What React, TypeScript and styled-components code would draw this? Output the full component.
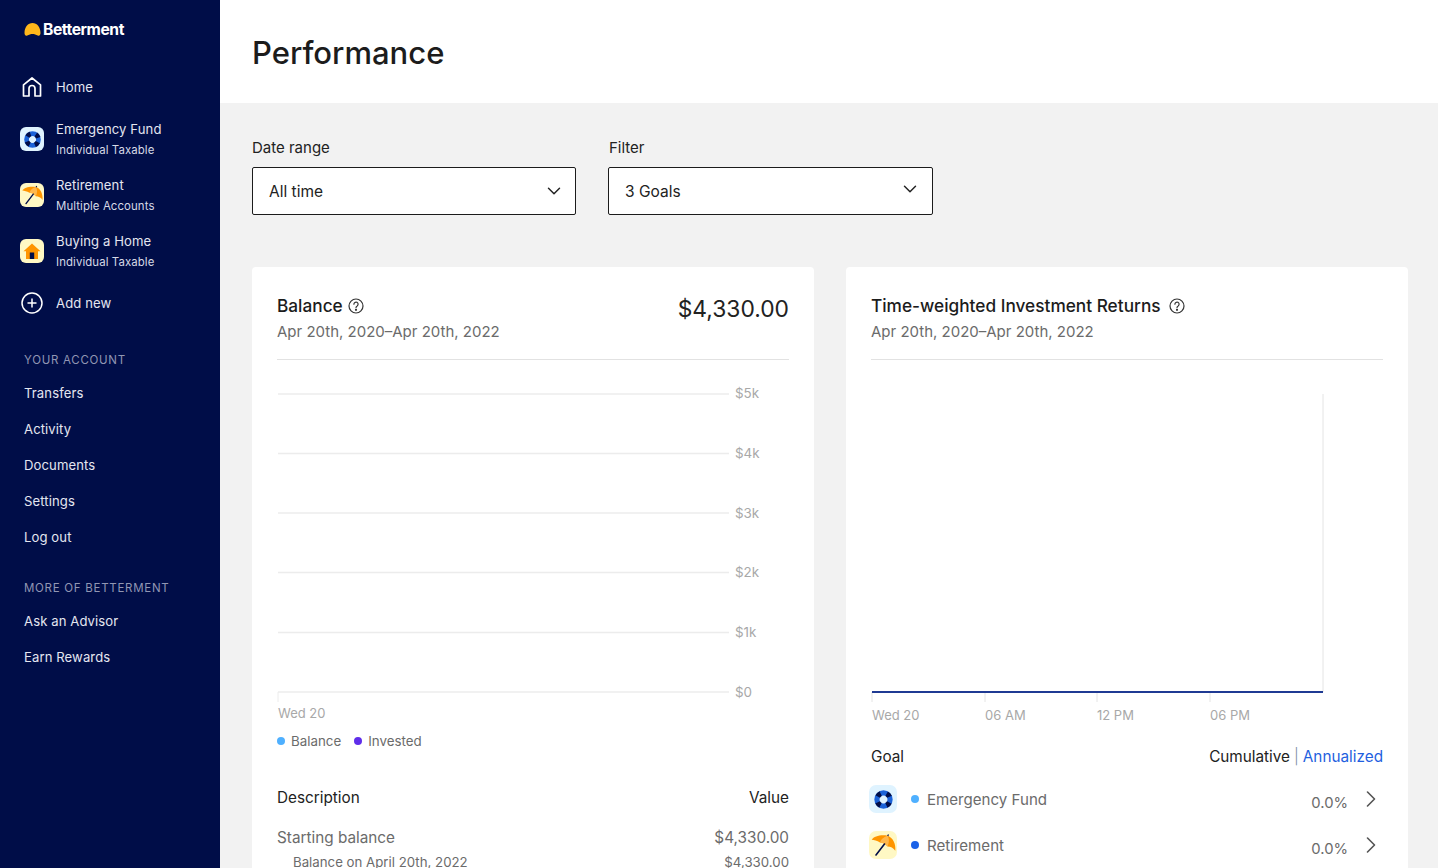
import React from 'react'
import styled, { createGlobalStyle } from 'styled-components'
import { ChevronDown, ChevronRight } from 'lucide-react'

const FONT = `Inter, "Liberation Sans", sans-serif`

const GlobalStyle = createGlobalStyle`
  html, body {
    margin: 0;
    height: 100%;
    overflow: hidden;
    background: #f2f2f2;
    font-family: ${FONT};
  }
  * { box-sizing: border-box; }
`

const Page = styled.div`
  display: flex;
  width: 1438px;
  height: 868px;
  overflow: hidden;
`

const Sidebar = styled.nav`
  flex: 0 0 220px;
  background: #000d48;
  color: #e4e6f0;
  padding: 20px 0 0;
`

const Logo = styled.div`
  display: flex;
  align-items: center;
  gap: 2px;
  height: 18px;
  margin: 0 0 25px 24px;
  color: #fff;
  font-size: 15.7px;
  font-weight: 700;
  letter-spacing: -0.46px;
`

const NavRow = styled.div<{ $short?: boolean }>`
  display: flex;
  align-items: center;
  height: ${p => (p.$short ? 48 : 56)}px;
  padding-left: 20px;
`

const NavIcon = styled.div`
  flex: 0 0 36px;
  display: flex;
  align-items: center;
`

const NavText = styled.div`
  display: flex;
  flex-direction: column;
  gap: 6px;
`

const NavTitle = styled.span`
  font-size: 13.1px;
  line-height: 16px;
  letter-spacing: 0.1px;
`

const NavSub = styled.span`
  font-size: 11.4px;
  line-height: 15px;
  letter-spacing: 0.1px;
  color: #d6d9e6;
`

const SectionLabel = styled.div`
  margin: 24px 0 0 24px;
  height: 18px;
  font-size: 11.5px;
  line-height: 18px;
  letter-spacing: 0.72px;
  color: #9196b3;
`

const NavLinks = styled.div`
  display: flex;
  flex-direction: column;
  padding: 6px 0 0 24px;
`

const NavLink = styled.div`
  height: 36px;
  font-size: 13.1px;
  line-height: 36px;
  letter-spacing: 0.1px;
`

const IconTile = styled.div<{ $bg: string; $size: number }>`
  width: ${p => p.$size}px;
  height: ${p => p.$size}px;
  border-radius: ${p => Math.round(p.$size / 4)}px;
  background: ${p => p.$bg};
  display: flex;
  align-items: center;
  justify-content: center;
  flex: none;
`

const Main = styled.main`
  flex: 1;
  min-width: 0;
`

const Header = styled.header`
  height: 103px;
  background: #fff;
  padding: 32px 32px 0;
`

const PageTitle = styled.h1`
  margin: 0;
  font-size: 31px;
  line-height: 42px;
  font-weight: 500;
  color: #1c1c1c;
`

const Content = styled.div`
  padding: 36px 30px 0 32px;
`

const Filters = styled.div`
  display: flex;
  gap: 32px;
  margin-bottom: 52px;
`

const Field = styled.div<{ $width: number }>`
  width: ${p => p.$width}px;
`

const FieldLabel = styled.div<{ $inset?: boolean }>`
  font-size: 15px;
  line-height: 18px;
  color: #222;
  margin-bottom: 10px;
  padding-left: ${p => (p.$inset ? 1 : 0)}px;
`

const Select = styled.div`
  height: 48px;
  border: 1px solid #1c1c1c;
  border-radius: 2px;
  background: #fff;
  display: flex;
  align-items: center;
  justify-content: space-between;
  padding: 0 10px 0 16px;
  font-size: 15.5px;
  color: #222;
`

const Chevron = styled(ChevronDown)<{ $raised?: boolean }>`
  flex: none;
  margin: ${p => (p.$raised ? '0 1px 4px 0' : '0')};
`

const Cards = styled.div`
  display: grid;
  grid-template-columns: 562px 562px;
  gap: 32px;
`

const Card = styled.section`
  background: #fff;
  border-radius: 4px;
  padding: 28px 25px 0;
  height: 640px;
`

const CardHead = styled.div`
  display: flex;
  justify-content: space-between;
  height: 65px;
  border-bottom: 1px solid #e2e2e2;
`

const CardTitle = styled.div<{ $gap: number }>`
  display: flex;
  align-items: center;
  gap: ${p => p.$gap}px;
  font-size: 17.25px;
  line-height: 22px;
  font-weight: 500;
  color: #1c1c1c;
`

const CardDate = styled.div`
  margin-top: 5px;
  font-size: 15px;
  line-height: 20px;
  color: #6b6b6b;
`

const BigValue = styled.div`
  font-size: 22.8px;
  line-height: 28px;
  color: #222;
`

const Chart = styled.svg`
  display: block;
  font-family: ${FONT};
`

const Legend = styled.div`
  display: flex;
  gap: 13px;
  margin-top: 7px;
  height: 20px;
  align-items: center;
  font-size: 13.35px;
  color: #6b6b6b;
`

const LegendItem = styled.span`
  display: flex;
  align-items: center;
  gap: 6px;
`

const Dot = styled.span<{ $color: string }>`
  width: 8px;
  height: 8px;
  border-radius: 50%;
  background: ${p => p.$color};
  flex: none;
`

const TableHead = styled.div`
  display: flex;
  justify-content: space-between;
  font-size: 15.3px;
  line-height: 20px;
  color: #222;
`

const DescHead = styled(TableHead)`
  margin-top: 37px;
`

const StartRow = styled(TableHead)`
  margin-top: 20px;
  color: #6b6b6b;
`

const SubRow = styled(TableHead)`
  margin-top: 4px;
  padding-left: 16px;
  font-size: 13.25px;
  color: #6b6b6b;
`

const GoalHead = styled(TableHead)`
  margin-top: 23px;
`

const Toggle = styled.div`
  display: flex;
  gap: 4px;
`

const ToggleLink = styled.span`
  color: #1f5fe0;
`

const ToggleBar = styled.span`
  color: #7a8aa3;
  font-weight: 300;
`

const GoalRow = styled.div`
  display: flex;
  align-items: center;
  height: 46px;
  color: #6b6b6b;
  font-size: 15.1px;
`

const GoalList = styled.div`
  margin-top: 9px;
  margin-left: -2px;
`

const GoalName = styled.span`
  margin-left: 14px;
  flex: 1;
  display: flex;
  align-items: center;
  gap: 8px;
`

const GoalValue = styled.span`
  margin-top: 7px;
  margin-right: 9px;
  font-size: 14.8px;
`

const ArrowBox = styled.span`
  width: 28px;
  display: flex;
  color: #555;
  margin: -1px -2px 0 0;
`

function BuoyIcon({ size }: { size: number }) {
  return (
    <svg width={size} height={size} viewBox="0 0 16 16">
      <circle cx="8" cy="8" r="5" fill="none" stroke="#1b62d8" strokeWidth="4" />
      <circle cx="8" cy="8" r="5" fill="none" stroke="#000d48" strokeWidth="4" strokeDasharray="3.2 4.65" strokeDashoffset="-2.33" />
    </svg>
  )
}

function UmbrellaIcon({ size }: { size: number }) {
  return (
    <svg width={size} height={size} viewBox="0 0 28 28">
      <path d="M2.700 8.700C5 5 12 3.500 18.700 4.700 24 6.500 27 13 26.300 19.700 24.500 17 21.500 15.500 18.500 15.500 17 13.500 14 11.500 11 11.500 8 9.500 5 9 2.700 8.700z" fill="#ff9500" />
      <path d="M11 11.500C12 8 15 5.500 18.700 4.700 20.500 8 20.200 12 18.500 15.500 17 13.500 14 11.500 11 11.500z" fill="#ffb84d" />
      <path d="M15.500 13 7 24" stroke="#000d48" strokeWidth="1.600" strokeLinecap="round" />
      <path d="M18.700 5l.8-1.600" stroke="#000d48" strokeWidth="1.200" />
    </svg>
  )
}

function HouseIcon({ size }: { size: number }) {
  return (
    <svg width={size} height={size} viewBox="0 0 20 20">
      <path d="M10 2.500 1.500 10.300h2.500V18h12v-7.700h2.500z" fill="#ff9500" />
      <rect x="7.800" y="11.500" width="4.400" height="6.500" fill="#000d48" />
    </svg>
  )
}

function HelpIcon() {
  return (
    <svg width="18" height="18" viewBox="0 0 18 18" fill="none" stroke="#333" strokeWidth="1.200">
      <circle cx="9" cy="9" r="7" />
      <path d="M6.900 7.200a2.100 2.100 0 1 1 3.300 1.700c-.8.500-1.200.9-1.200 1.800" strokeLinecap="round" />
      <circle cx="9" cy="12.800" r=".5" fill="#333" />
    </svg>
  )
}

const balanceTicks = [
  { label: '$5k', line: 34, text: 38 },
  { label: '$4k', line: 93.500, text: 98 },
  { label: '$3k', line: 153, text: 158 },
  { label: '$2k', line: 212.500, text: 217 },
  { label: '$1k', line: 272.500, text: 277 },
  { label: '$0', line: 332, text: 337 },
]

function BalanceChart() {
  return (
    <Chart width="512" height="364" viewBox="0 0 512 364">
      {balanceTicks.map(t => (
        <g key={t.label}>
          <line x1="1" x2="452" y1={t.line} y2={t.line} stroke="#ececec" strokeWidth="1.500" />
          <text x="458" y={t.text} fontSize="13.400" fill="#a8a8a8">{t.label}</text>
        </g>
      ))}
      <line x1="1" x2="1" y1="332" y2="342" stroke="#ececec" />
      <text x="1" y="358" fontSize="13" fill="#a8a8a8">Wed 20</text>
    </Chart>
  )
}

const returnTicks = [
  { x: 1, label: 'Wed 20' },
  { x: 114, label: '06 AM' },
  { x: 226, label: '12 PM' },
  { x: 339, label: '06 PM' },
]

function ReturnsChart() {
  return (
    <Chart width="512" height="364" viewBox="0 0 512 364">
      <line x1="452" x2="452" y1="34" y2="332" stroke="#e4e4e4" />
      {returnTicks.map(t => (
        <g key={t.label}>
          <line x1={t.x} x2={t.x} y1="332" y2="342" stroke="#e4e4e4" />
          <text x={t.x} y="360" fontSize="13" fill="#a8a8a8">{t.label}</text>
        </g>
      ))}
      <line x1="1" x2="452" y1="332" y2="332" stroke="#1f3a93" strokeWidth="2" />
    </Chart>
  )
}

export default function App() {
  return (
    <>
      <GlobalStyle />
      <Page>
        <Sidebar>
          <Logo>
            <svg width="17" height="13" viewBox="0 0 17 13">
              <path d="M.5 10C.5 4 4 0 8.500 0S16.500 4 16.500 10c0 2-1.200 3.200-2.800 2.500C12 11.600 10.300 11 8.500 11s-3.500.6-5.200 1.500C1.700 13.200.5 12 .5 10z" fill="#ffb71b" />
            </svg>
            Betterment
          </Logo>
          <NavRow $short>
            <NavIcon>
              <svg width="24" height="24" viewBox="0 0 24 24" fill="none" stroke="#fff" strokeWidth="1.700">
                <path d="M3.500 21V9.800L12 3l8.500 6.800V21h-5.500v-7.500a3 3 0 0 0-6 0V21z" strokeLinejoin="round" />
              </svg>
            </NavIcon>
            <NavTitle>Home</NavTitle>
          </NavRow>
          <NavRow>
            <NavIcon><IconTile $bg="#dff3ff" $size={24}><BuoyIcon size={19} /></IconTile></NavIcon>
            <NavText><NavTitle>Emergency Fund</NavTitle><NavSub>Individual Taxable</NavSub></NavText>
          </NavRow>
          <NavRow>
            <NavIcon><IconTile $bg="#fff8c4" $size={24}><UmbrellaIcon size={24} /></IconTile></NavIcon>
            <NavText><NavTitle>Retirement</NavTitle><NavSub>Multiple Accounts</NavSub></NavText>
          </NavRow>
          <NavRow>
            <NavIcon><IconTile $bg="#fff8c4" $size={24}><HouseIcon size={20} /></IconTile></NavIcon>
            <NavText><NavTitle>Buying a Home</NavTitle><NavSub>Individual Taxable</NavSub></NavText>
          </NavRow>
          <NavRow $short>
            <NavIcon>
              <svg width="24" height="24" viewBox="0 0 24 24" fill="none" stroke="#fff" strokeWidth="1.500">
                <circle cx="12" cy="12" r="10" />
                <path d="M12 7.500v9M7.500 12h9" />
              </svg>
            </NavIcon>
            <NavTitle>Add new</NavTitle>
          </NavRow>
          <SectionLabel>YOUR ACCOUNT</SectionLabel>
          <NavLinks>
            <NavLink>Transfers</NavLink>
            <NavLink>Activity</NavLink>
            <NavLink>Documents</NavLink>
            <NavLink>Settings</NavLink>
            <NavLink>Log out</NavLink>
          </NavLinks>
          <SectionLabel>MORE OF BETTERMENT</SectionLabel>
          <NavLinks>
            <NavLink>Ask an Advisor</NavLink>
            <NavLink>Earn Rewards</NavLink>
          </NavLinks>
        </Sidebar>
        <Main>
          <Header><PageTitle>Performance</PageTitle></Header>
          <Content>
            <Filters>
              <Field $width={324}>
                <FieldLabel>Date range</FieldLabel>
                <Select>All time<Chevron size={22} strokeWidth={1.600} /></Select>
              </Field>
              <Field $width={325}>
                <FieldLabel $inset>Filter</FieldLabel>
                <Select>3 Goals<Chevron size={22} strokeWidth={1.600} $raised /></Select>
              </Field>
            </Filters>
            <Cards>
              <Card>
                <CardHead>
                  <div>
                    <CardTitle $gap={4}>Balance<HelpIcon /></CardTitle>
                    <CardDate>Apr 20th, 2020–Apr 20th, 2022</CardDate>
                  </div>
                  <BigValue>$4,330.00</BigValue>
                </CardHead>
                <BalanceChart />
                <Legend>
                  <LegendItem><Dot $color="#4fb0ff" />Balance</LegendItem>
                  <LegendItem><Dot $color="#5f2eea" />Invested</LegendItem>
                </Legend>
                <DescHead><span>Description</span><span>Value</span></DescHead>
                <StartRow><span>Starting balance</span><span>$4,330.00</span></StartRow>
                <SubRow><span>Balance on April 20th, 2022</span><span>$4,330.00</span></SubRow>
              </Card>
              <Card>
                <CardHead>
                  <div>
                    <CardTitle $gap={7}>Time-weighted Investment Returns<HelpIcon /></CardTitle>
                    <CardDate>Apr 20th, 2020–Apr 20th, 2022</CardDate>
                  </div>
                </CardHead>
                <ReturnsChart />
                <GoalHead>
                  <span>Goal</span>
                  <Toggle><span>Cumulative</span><ToggleBar>|</ToggleBar><ToggleLink>Annualized</ToggleLink></Toggle>
                </GoalHead>
                <GoalList>
                  <GoalRow>
                    <IconTile $bg="#dff3ff" $size={28}><BuoyIcon size={21} /></IconTile>
                    <GoalName><Dot $color="#4fb0ff" />Emergency Fund</GoalName>
                    <GoalValue>0.0%</GoalValue>
                    <ArrowBox><ChevronRight size={28} strokeWidth={1.400} /></ArrowBox>
                  </GoalRow>
                  <GoalRow>
                    <IconTile $bg="#fff8c4" $size={28}><UmbrellaIcon size={28} /></IconTile>
                    <GoalName><Dot $color="#1b62e8" />Retirement</GoalName>
                    <GoalValue>0.0%</GoalValue>
                    <ArrowBox><ChevronRight size={28} strokeWidth={1.400} /></ArrowBox>
                  </GoalRow>
                </GoalList>
              </Card>
            </Cards>
          </Content>
        </Main>
      </Page>
    </>
  )
}
